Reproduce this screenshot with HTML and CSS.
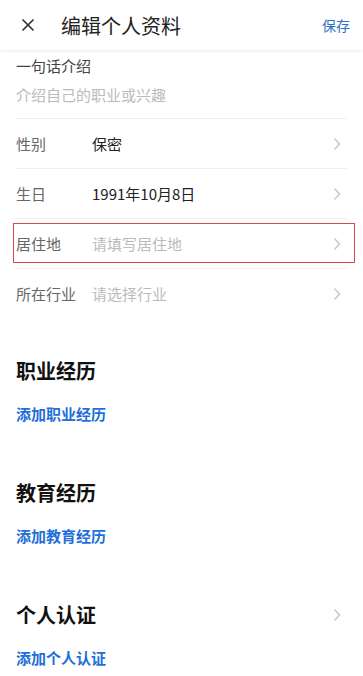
FILE: index.html
```html
<!DOCTYPE html>
<html lang="zh-CN">
<head>
  <meta charset="UTF-8">
  <title>编辑个人资料</title>
  <meta name="viewport" content="width=device-width, initial-scale=1.0">
  <link rel="stylesheet" href="styles.css">
</head>
<body>

<div class="header">
  <svg class="close" width="12" height="12" viewBox="0 0 12 12">
    <path d="M1 1 L11 11 M11 1 L1 11" stroke="#333" stroke-width="1.7" fill="none" stroke-linecap="round"/>
  </svg>
  <span class="title">编辑个人资料</span>
  <span class="save">保存</span>
</div>

<div class="content">
  <div class="intro">
    <div class="intro-label">一句话介绍</div>
    <div class="intro-hint">介绍自己的职业或兴趣</div>
  </div>

  <div class="row">
    <span class="label">性别</span>
    <span class="value">保密</span>
    <svg class="arrow" width="8" height="14" viewBox="0 0 8 14"><path d="M1.5 1.5 L6.5 7 L1.5 12.5" stroke="#c8c8c8" stroke-width="1.5" fill="none"/></svg>
  </div>
  <div class="row">
    <span class="label">生日</span>
    <span class="value">1991年10月8日</span>
    <svg class="arrow" width="8" height="14" viewBox="0 0 8 14"><path d="M1.5 1.5 L6.5 7 L1.5 12.5" stroke="#c8c8c8" stroke-width="1.5" fill="none"/></svg>
  </div>
  <div class="row marked">
    <span class="label">居住地</span>
    <span class="value empty">请填写居住地</span>
    <svg class="arrow" width="8" height="14" viewBox="0 0 8 14"><path d="M1.5 1.5 L6.5 7 L1.5 12.5" stroke="#c8c8c8" stroke-width="1.5" fill="none"/></svg>
  </div>
  <div class="row last">
    <span class="label">所在行业</span>
    <span class="value empty">请选择行业</span>
    <svg class="arrow" width="8" height="14" viewBox="0 0 8 14"><path d="M1.5 1.5 L6.5 7 L1.5 12.5" stroke="#c8c8c8" stroke-width="1.5" fill="none"/></svg>
  </div>

  <div class="section">
    <div class="section-head"><span>职业经历</span></div>
    <div class="add">添加职业经历</div>
  </div>
  <div class="section">
    <div class="section-head"><span>教育经历</span></div>
    <div class="add">添加教育经历</div>
  </div>
  <div class="section">
    <div class="section-head">
      <span>个人认证</span>
      <svg class="arrow" width="8" height="14" viewBox="0 0 8 14"><path d="M1.5 1.5 L6.5 7 L1.5 12.5" stroke="#c8c8c8" stroke-width="1.5" fill="none"/></svg>
    </div>
    <div class="add">添加个人认证</div>
  </div>
</div>

</body>
</html>
```

FILE: styles.css
```css
body {
  font-family: "Noto Sans CJK SC", "Noto Sans", sans-serif;
  background: #fff;
  margin: 0;
  color: #222;
  overflow: hidden;
}

.header {
  height: 50px;
  display: flex;
  align-items: center;
  padding: 0 13px 0 22px;
  background: #fff;
  box-shadow: 0 1px 3px rgba(0,0,0,0.08);
  position: relative;
}

.close {
  flex: none;
}

.title {
  margin-left: 27px;
  font-size: 20px;
  color: #222;
  flex: 1;
}

.save {
  font-size: 14px;
  color: #2a6fc9;
}

.content {
  padding: 0 16px;
}

.intro {
  padding-top: 5px;
  height: 63px;
  border-bottom: 1px solid #eee;
}

.intro-label {
  font-size: 15px;
  line-height: 22px;
  color: #444;
}

.intro-hint {
  font-size: 15px;
  line-height: 22px;
  color: #bbb;
  margin-top: 7px;
}

.row {
  height: 49px;
  display: flex;
  align-items: center;
  border-bottom: 1px solid #eee;
  font-size: 15px;
  position: relative;
}

.row.last {
  border-bottom: none;
}

.row.marked::after {
  content: "";
  position: absolute;
  top: 4px;
  bottom: 5px;
  left: -3px;
  right: -8px;
  border: 1px solid #d84a4a;
}

.label {
  width: 76px;
  color: #666;
}

.value {
  flex: 1;
  color: #222;
}

.value.empty {
  color: #bbb;
}

.arrow {
  margin-right: 6px;
}

.section {
  padding: 39px 0 15px;
}

.section-head {
  display: flex;
  align-items: center;
  justify-content: space-between;
  font-size: 20px;
  font-weight: bold;
  line-height: 28px;
  color: #111;
}

.add {
  margin-top: 18px;
  font-size: 15px;
  font-weight: bold;
  line-height: 22px;
  color: #1e6fd9;
}
```
